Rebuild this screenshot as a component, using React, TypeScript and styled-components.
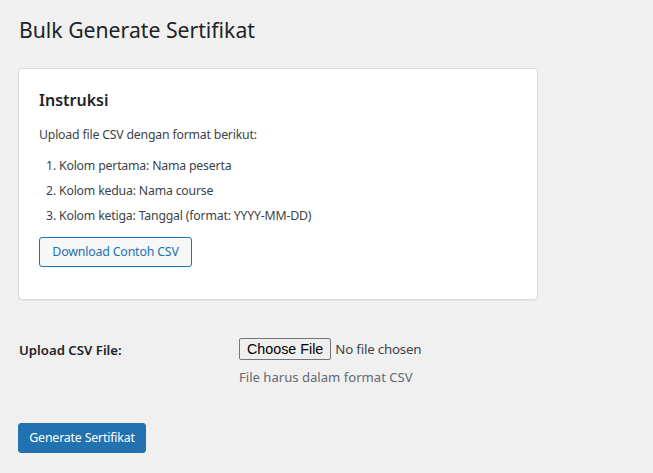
import React from "react";
import styled, { createGlobalStyle } from "styled-components";

const Global = createGlobalStyle`
  html, body { margin: 0; padding: 0; background: #f0f0f1; }
  body {
    font-family: "Noto Sans", "Open Sans", sans-serif;
    font-size: 12.3px;
    letter-spacing: -0.2px;
    color: #3c434a;
    line-height: 1.4;
  }
  * { box-sizing: border-box; }
`;

const Wrap = styled.div`
  padding: 0 20px 0 19px;
  width: 653px;
  min-height: 473px;
`;

const Title = styled.h1`
  margin: 0;
  padding: 14px 0 0;
  font-size: 21.2px;
  font-weight: 400;
  line-height: 32px;
  letter-spacing: 0;
  color: #1d2327;
`;

const Card = styled.div`
  margin: 22px 0 0 -1px;
  width: 520px;
  background: #fff;
  border: 1px solid #dcdcde;
  border-radius: 4px;
  box-shadow: 0 1px 1px rgba(0, 0, 0, 0.04);
  padding: 18px 20px 32px;
`;

const CardTitle = styled.h2`
  margin: 0;
  font-size: 16px;
  font-weight: 600;
  line-height: 26px;
  letter-spacing: 0;
  color: #1d2327;
`;

const Para = styled.p`
  margin: 10px 0 0;
  line-height: 24px;
`;

const List = styled.ol`
  margin: 9px 0 0;
  padding: 0 0 0 20px;
`;

const Item = styled.li`
  line-height: 19px;
  margin-bottom: 6px;
`;

const Button = styled.button<{ $primary?: boolean }>`
  font-family: inherit;
  font-size: 12.4px;
  letter-spacing: -0.2px;
  line-height: 28px;
  height: 30px;
  padding: 0 10px;
  white-space: nowrap;
  border-radius: 3px;
  cursor: pointer;
  border: 1px solid #2271b1;
  background: ${(p) => (p.$primary ? "#2271b1" : "#f6f7f7")};
  color: ${(p) => (p.$primary ? "#fff" : "#2271b1")};
`;

const DownloadButton = styled(Button)`
  margin-top: 6px;
  min-width: 153px;
`;

const FormRow = styled.div`
  display: grid;
  grid-template-columns: 220px 1fr;
  margin-top: 38px;
`;

const Label = styled.label`
  font-weight: 600;
  font-size: 13.2px;
  letter-spacing: 0;
  color: #1d2327;
  line-height: 22px;
  padding-top: 1px;
`;

const Field = styled.div`
  display: flex;
  flex-direction: column;
`;

const FileRow = styled.div`
  display: flex;
  align-items: center;
  gap: 4px;
`;

const FileButton = styled.span`
  font-family: "Liberation Sans", Arial, sans-serif;
  font-size: 14.3px;
  letter-spacing: 0;
  color: #000;
  background: #efefef;
  border: 1px solid #767676;
  border-radius: 2px;
  height: 22px;
  line-height: 20px;
  padding: 0 7px;
`;

const FileStatus = styled.span`
  font-size: 13.3px;
  color: #3c434a;
`;

const Description = styled.p`
  margin: 7px 0 0;
  color: #646970;
  font-size: 13.1px;
  letter-spacing: 0;
  line-height: 20px;
`;

const Submit = styled(Button)`
  margin-top: 36px;
  margin-left: -1px;
  min-width: 128px;
`;

export default function App() {
  return (
    <>
      <Global />
      <Wrap>
        <Title>Bulk Generate Sertifikat</Title>
        <Card>
          <CardTitle>Instruksi</CardTitle>
          <Para>Upload file CSV dengan format berikut:</Para>
          <List>
            <Item>Kolom pertama: Nama peserta</Item>
            <Item>Kolom kedua: Nama course</Item>
            <Item>Kolom ketiga: Tanggal (format: YYYY-MM-DD)</Item>
          </List>
          <DownloadButton>Download Contoh CSV</DownloadButton>
        </Card>
        <FormRow>
          <Label>Upload CSV File:</Label>
          <Field>
            <FileRow>
              <FileButton>Choose File</FileButton>
              <FileStatus>No file chosen</FileStatus>
            </FileRow>
            <Description>File harus dalam format CSV</Description>
          </Field>
        </FormRow>
        <Submit $primary>Generate Sertifikat</Submit>
      </Wrap>
    </>
  );
}
